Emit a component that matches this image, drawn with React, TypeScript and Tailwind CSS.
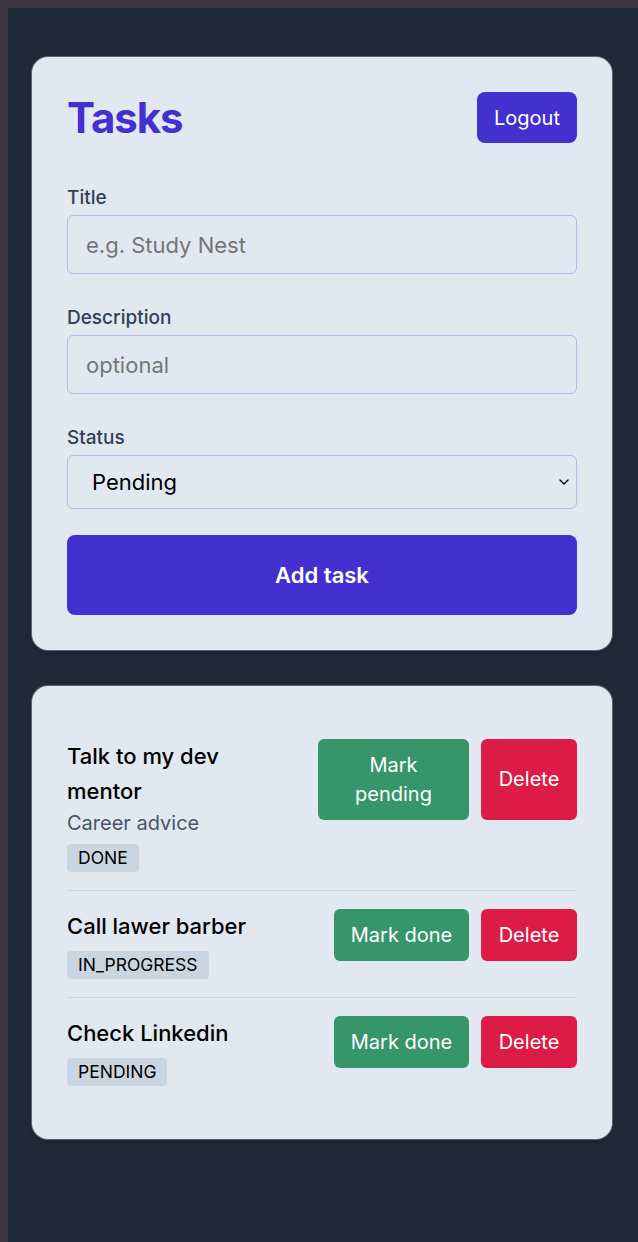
import { ChevronDown } from "lucide-react";

type Task = {
  id: number;
  title: string;
  description?: string;
  status: "DONE" | "IN_PROGRESS" | "PENDING";
};

const TASKS: Task[] = [
  { id: 1, title: "Talk to my dev mentor", description: "Career advice", status: "DONE" },
  { id: 2, title: "Call lawer barber", status: "IN_PROGRESS" },
  { id: 3, title: "Check Linkedin", status: "PENDING" },
];

const Field = ({ label, children }: { label: string; children: React.ReactNode }) => (
  <div className="flex flex-col">
    <label className="text-[19px] leading-6 font-medium text-slate-700 mb-[5px]">{label}</label>
    {children}
  </div>
);

const TaskRow = ({ task, last }: { task: Task; last: boolean }) => (
  <div className={`flex items-start justify-between gap-4 py-[18px] ${last ? "" : "border-b border-slate-300"}`}>
    <div className="flex-1 min-w-0 pr-2">
      <div className="text-[22px] leading-[35px] font-medium text-black max-w-[225px]">{task.title}</div>
      {task.description && (
        <div className="text-[20px] leading-[28px] text-slate-600">{task.description}</div>
      )}
      <span className="inline-block mt-[7px] px-[11px] h-[28px] leading-[28px] text-[17.5px] rounded bg-slate-300 text-black align-top">
        {task.status}
      </span>
    </div>
    <div className="flex items-start gap-3 shrink-0">
      {task.status === "DONE" ? (
        <button className="w-[151px] h-[81px] rounded-md bg-[#36966a] text-white text-[20px] leading-[29px] px-4">
          Mark
          <br />
          pending
        </button>
      ) : (
        <button className="w-[135px] h-[52px] rounded-md bg-[#36966a] text-white text-[20px] leading-[29px]">
          Mark done
        </button>
      )}
      <button
        className={`w-[96px] ${task.status === "DONE" ? "h-[81px]" : "h-[52px]"} rounded-md bg-[#dc1c46] text-white text-[20px] leading-[29px]`}
      >
        Delete
      </button>
    </div>
  </div>
);

export default function App() {
  return (
    <div className="min-h-[1242px] bg-[#3b3443] pt-2 pl-2 font-['Inter',sans-serif]">
      <div className="min-h-[1234px] bg-[#1f2937] pt-[49px] pl-6 pr-[26px]">
        {/* form card */}
        <div className="w-[580px] rounded-2xl bg-slate-200 p-[35px] shadow-md ring-1 ring-slate-400/50">
          <div className="flex h-[51px] items-center justify-between">
            <h1 className="text-[42px] leading-none font-bold text-[#4330cf] tracking-tight">Tasks</h1>
            <button className="h-[51px] w-[100px] rounded-lg bg-[#4330cf] text-white text-[20px]">Logout</button>
          </div>

          <div className="mt-[43px] flex flex-col gap-8">
            <Field label="Title">
              <input
                placeholder="e.g. Study Nest"
                className="h-[59px] w-full rounded-md border border-[#b9b9ee] bg-transparent px-[18px] text-[22px] placeholder:text-[#767676] outline-none"
              />
            </Field>
            <Field label="Description">
              <input
                placeholder="optional"
                className="h-[59px] w-full rounded-md border border-[#b9b9ee] bg-transparent px-[18px] text-[22px] placeholder:text-[#767676] outline-none"
              />
            </Field>
            <Field label="Status">
              <div className="relative">
                <select className="h-[54px] w-full appearance-none rounded-md border border-[#b9b9ee] bg-transparent pl-6 text-[22px] text-black outline-none">
                  <option>Pending</option>
                  <option>In progress</option>
                  <option>Done</option>
                </select>
                <ChevronDown
                  size={16}
                  strokeWidth={2}
                  className="pointer-events-none absolute right-[5px] top-1/2 -translate-y-1/2 text-black"
                />
              </div>
            </Field>
          </div>

          <button className="mt-[26px] h-[80px] w-full rounded-lg bg-[#4330cf] text-white text-[22px] font-semibold">
            Add task
          </button>
        </div>

        {/* list card */}
        <div className="mt-9 w-[580px] rounded-2xl bg-slate-200 p-[35px] shadow-md ring-1 ring-slate-400/50">
          {TASKS.map((t, i) => (
            <TaskRow key={t.id} task={t} last={i === TASKS.length - 1} />
          ))}
        </div>
      </div>
    </div>
  );
}
